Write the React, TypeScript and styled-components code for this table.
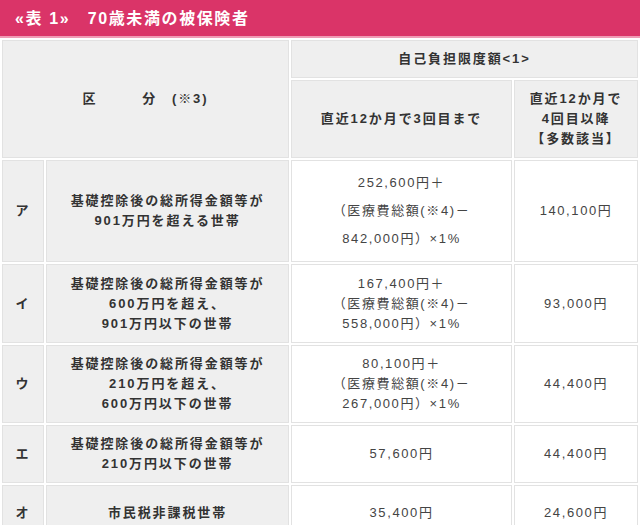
import styled, { createGlobalStyle } from 'styled-components'

const GlobalStyle = createGlobalStyle`
	html,
	body {
		margin: 0;
		padding: 0;
		background: #fff;
		font-family: 'Liberation Sans', 'Noto Sans CJK JP', sans-serif;
	}

	* {
		box-sizing: border-box;
	}
`

const TitleBar = styled.div`
	height: 38px;
	background-color: #da3468;
	border-bottom: 2px solid #ef9bb5;
	color: #fff;
	font-size: 16px;
	font-weight: 700;
	letter-spacing: 1.6px;
	display: flex;
	align-items: center;
	padding: 0 0 2px 15px;
	white-space: pre;
`

const Table = styled.table`
	width: 640px;
	table-layout: fixed;
	border-collapse: separate;
	border-spacing: 2px;
	margin: 0;
	background: #fff;
`

const Row = styled.tr<{ $h: number }>`
	height: ${(p) => p.$h}px;
`

const Cell = styled.td<{ $head?: boolean; $loose?: boolean; $bold?: boolean }>`
	border: 1px solid #e2e2e2;
	background-color: ${(p) => (p.$head ? '#efefef' : '#fff')};
	color: ${(p) => (p.$bold ? '#333' : '#444')};
	font-size: 13px;
	font-weight: ${(p) => (p.$bold ? 700 : 400)};
	letter-spacing: ${(p) => (p.$bold ? '1.9px' : '1.6px')};
	line-height: ${(p) => (p.$loose ? '28px' : '20px')};
	text-align: center;
	vertical-align: middle;
	padding: 0 2px;
	white-space: pre-line;
`

const rows = [
	{
		key: 'ア',
		h: 102,
		desc: '基礎控除後の総所得金額等が\n901万円を超える世帯',
		amount: '252,600円＋\n（医療費総額(※4)－\n842,000円）×1%',
		loose: true,
		many: '140,100円'
	},
	{
		key: 'イ',
		h: 79,
		desc: '基礎控除後の総所得金額等が\n600万円を超え、\n901万円以下の世帯',
		amount: '167,400円＋\n（医療費総額(※4)－\n558,000円）×1%',
		many: '93,000円'
	},
	{
		key: 'ウ',
		h: 78,
		desc: '基礎控除後の総所得金額等が\n210万円を超え、\n600万円以下の世帯',
		amount: '80,100円＋\n（医療費総額(※4)－\n267,000円）×1%',
		many: '44,400円'
	},
	{
		key: 'エ',
		h: 58,
		desc: '基礎控除後の総所得金額等が\n210万円以下の世帯',
		amount: '57,600円',
		many: '44,400円'
	},
	{
		key: 'オ',
		h: 56,
		desc: '市民税非課税世帯',
		amount: '35,400円',
		many: '24,600円'
	}
]

export default function App() {
	return (
		<>
			<GlobalStyle />
			<TitleBar>{'«表 1»　70歳未満の被保険者'}</TitleBar>
			<Table>
				<colgroup>
					<col style={{ width: 42 }} />
					<col style={{ width: 243 }} />
					<col style={{ width: 221 }} />
					<col style={{ width: 124 }} />
				</colgroup>
				<tbody>
					<Row $h={38}>
						<Cell $head $bold colSpan={2} rowSpan={2}>
							{'区　　　分　(※3)'}
						</Cell>
						<Cell $head $bold colSpan={2}>
							自己負担限度額&lt;1&gt;
						</Cell>
					</Row>
					<Row $h={78}>
						<Cell $head $bold>直近12か月で3回目まで</Cell>
						<Cell $head $bold>{'直近12か月で\n4回目以降\n【多数該当】'}</Cell>
					</Row>
					{rows.map((r) => (
						<Row key={r.key} $h={r.h}>
							<Cell $head $bold>{r.key}</Cell>
							<Cell $head $bold>{r.desc}</Cell>
							<Cell $loose={r.loose}>{r.amount}</Cell>
							<Cell>{r.many}</Cell>
						</Row>
					))}
				</tbody>
			</Table>
		</>
	)
}
